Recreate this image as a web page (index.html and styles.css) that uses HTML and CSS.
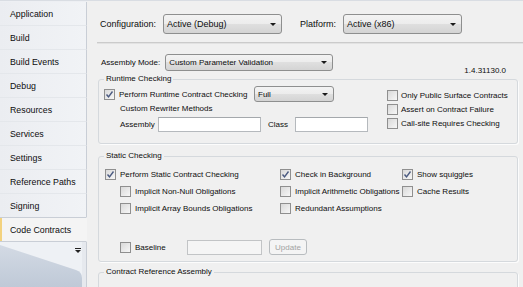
FILE: index.html
```html
<!DOCTYPE html>
<html>
	<head>
		<meta charset="UTF-8">
		<title>Code Contracts</title>
		<link rel="stylesheet" href="styles.css">
	</head>
	<body>
		<div class="page">
			<div class="tabs">
				<div class="tab">Application</div>
				<div class="tab">Build</div>
				<div class="tab">Build Events</div>
				<div class="tab">Debug</div>
				<div class="tab">Resources</div>
				<div class="tab">Services</div>
				<div class="tab">Settings</div>
				<div class="tab">Reference Paths</div>
				<div class="tab">Signing</div>
				<div class="tab active">Code Contracts</div>
				<div class="tabs-foot">
					<svg width="86" height="45" viewBox="0 0 86 45">
						<defs>
							<linearGradient id="fold" x1="0" y1="0" x2="0" y2="1">
								<stop offset="0" stop-color="#d3dae4"/>
								<stop offset="1" stop-color="#bfc9d7"/>
							</linearGradient>
						</defs>
						<path d="M0 3 L76 28 Q82 30 82 36 L82 45 L0 45 Z" fill="url(#fold)"/>
						<rect x="82" y="0" width="4" height="45" fill="#e6e9ee"/>
						<rect x="75" y="6" width="6" height="1" fill="#222"/>
						<polygon points="75,8 81,8 78,11" fill="#222"/>
					</svg>
				</div>
			</div>

			<div class="content">
				<div class="config-bar">
					<span class="lbl">Configuration:</span>
					<div class="combo big w-config"><span>Active (Debug)</span><i class="arrow"></i></div>
					<span class="lbl platform">Platform:</span>
					<div class="combo big w-platform"><span>Active (x86)</span><i class="arrow"></i></div>
				</div>
				<div class="sep"></div>

				<div class="mode-row">
					<span class="small">Assembly Mode:</span>
					<div class="combo w-mode"><span>Custom Parameter Validation</span><i class="arrow"></i></div>
					<span class="small version">1.4.31130.0</span>
				</div>

				<fieldset class="group">
					<legend>Runtime Checking</legend>
					<div class="runtime">
						<div class="rt-left">
							<div class="rt-row">
								<label class="check w-perform"><span class="cb on"><svg width="9" height="9" viewBox="0 0 9 9"><path d="M1.5 4.5 L3.5 6.8 L7.5 1.5" fill="none" stroke="#4a5a80" stroke-width="1.4"/></svg></span>Perform Runtime Contract Checking</label>
								<div class="combo w-full"><span>Full</span><i class="arrow"></i></div>
							</div>
							<div class="rt-caption">Custom Rewriter Methods</div>
							<div class="rt-row inputs">
								<span class="w-asm">Assembly</span>
								<span class="field w-asm-in"></span>
								<span class="w-class">Class</span>
								<span class="field w-class-in"></span>
							</div>
						</div>
						<div class="rt-right">
							<label class="check"><span class="cb"></span>Only Public Surface Contracts</label>
							<label class="check"><span class="cb"></span>Assert on Contract Failure</label>
							<label class="check"><span class="cb"></span>Call-site Requires Checking</label>
						</div>
					</div>
				</fieldset>

				<fieldset class="group static">
					<legend>Static Checking</legend>
					<div class="static-grid">
						<label class="check"><span class="cb on"><svg width="9" height="9" viewBox="0 0 9 9"><path d="M1.5 4.5 L3.5 6.8 L7.5 1.5" fill="none" stroke="#4a5a80" stroke-width="1.4"/></svg></span>Perform Static Contract Checking</label>
						<label class="check"><span class="cb on"><svg width="9" height="9" viewBox="0 0 9 9"><path d="M1.5 4.5 L3.5 6.8 L7.5 1.5" fill="none" stroke="#4a5a80" stroke-width="1.4"/></svg></span>Check in Background</label>
						<label class="check"><span class="cb on"><svg width="9" height="9" viewBox="0 0 9 9"><path d="M1.5 4.5 L3.5 6.8 L7.5 1.5" fill="none" stroke="#4a5a80" stroke-width="1.4"/></svg></span>Show squiggles</label>

						<label class="check indent"><span class="cb"></span>Implicit Non-Null Obligations</label>
						<label class="check"><span class="cb"></span>Implicit Arithmetic Obligations</label>
						<label class="check"><span class="cb"></span>Cache Results</label>

						<label class="check indent"><span class="cb"></span>Implicit Array Bounds Obligations</label>
						<label class="check"><span class="cb"></span>Redundant Assumptions</label>
						<span></span>
					</div>
					<div class="baseline-row">
						<label class="check w-baseline"><span class="cb"></span>Baseline</label>
						<span class="field disabled w-base-in"></span>
						<span class="button disabled">Update</span>
					</div>
				</fieldset>

				<fieldset class="group last">
					<legend>Contract Reference Assembly</legend>
				</fieldset>
			</div>
		</div>
	</body>
</html>
```

FILE: styles.css
```css
html,body{
	margin: 0;
	padding: 0;
}
body{
	width: 523px;
	height: 287px;
	overflow: hidden;
	background: #f0f0f0;
	color: #0d0d0d;
	font-family: "Liberation Sans", Arial, sans-serif;
}
.page{
	display: flex;
	height: 287px;
	border-top: 1px solid #d9dde3;
	box-sizing: border-box;
	overflow: hidden;
}

/* left tab strip */
.tabs{
	width: 87px;
	flex: none;
	display: flex;
	flex-direction: column;
	padding-top: 1px;
	background: #edeff3;
}
.tab{
	height: 24px;
	flex: none;
	box-sizing: border-box;
	display: flex;
	align-items: center;
	padding-left: 10px;
	font-size: 8.8px;
	border-right: 1px solid #c9ced6;
	border-bottom: 1px solid #e4e7eb;
	background: linear-gradient(to right, #ebedf1, #f1f3f6);
}
.tab.active{
	background: #f4f4f4;
	border-right-color: #f4f4f4;
	border-top: 1px solid #c9ced6;
	border-bottom: 1px solid #c9ced6;
	box-shadow: inset 2px 0 0 #f3d27e;
	margin-top: -1px;
	height: 25px;
}
.tabs-foot{
	flex: 1;
	border-right: 1px solid #c9ced6;
	background: #eef1f5;
}
.tabs-foot svg{
	display: block;
}

/* right page */
.content{
	flex: 1;
	padding-top: 13px;
	font-size: 9px;
}
.config-bar{
	display: flex;
	align-items: center;
	height: 20px;
	padding-left: 13px;
}
.lbl{
	margin-right: 7px;
}
.platform{
	margin-left: 18px;
}
.combo{
	display: flex;
	align-items: center;
	box-sizing: border-box;
	height: 17px;
	border: 1px solid #8e8f8f;
	border-radius: 3px;
	padding-left: 3px;
	background: linear-gradient(#f3f3f3, #ececec 50%, #dfdfdf 50%, #d4d4d4);
	font-size: 8px;
}
.combo.big{
	height: 20px;
	font-size: 9px;
}
.combo span{
	flex: 1;
}
.arrow{
	width: 0;
	height: 0;
	border-left: 3px solid transparent;
	border-right: 3px solid transparent;
	border-top: 3px solid #1a1a1a;
	margin-right: 5px;
}
.w-config{ width: 119px; }
.w-platform{ width: 119px; }
.w-mode{ width: 168px; }
.w-full{ width: 80px; height: 16px; }

.sep{
	margin: 8px 0 0 10px;
	height: 2px;
	box-sizing: border-box;
	border-top: 1px solid #cbcbcb;
	border-bottom: 1px solid #e2e2e2;
}

.small,
.group{
	font-size: 8px;
}
.mode-row{
	display: flex;
	align-items: flex-end;
	margin-top: 10px;
	padding: 0 17px 0 14px;
}
.mode-row .small{
	align-self: center;
	margin-right: 5px;
}
.mode-row .version{
	align-self: flex-end;
	margin: 0 0 -6px auto;
	line-height: 12px;
}

/* group boxes */
.group{
	margin: 2px 5px 0 11px;
	padding: 0;
	border: 1px solid #d5d9dd;
	border-radius: 3px;
	box-shadow: 1px 1px 0 #fcfcfc;
}
.group legend{
	margin-left: 5px;
	padding: 0 2px;
	line-height: 12px;
}
.check{
	display: flex;
	align-items: center;
	white-space: nowrap;
}
.cb{
	width: 11px;
	height: 11px;
	flex: none;
	box-sizing: border-box;
	border: 1px solid #8f8f8f;
	background: linear-gradient(135deg, #d9d9d9, #f7f7f7);
	margin-right: 4px;
	display: flex;
	align-items: center;
	justify-content: center;
}
.cb svg{
	display: block;
}
.field{
	display: block;
	box-sizing: border-box;
	height: 15px;
	background: #fff;
	border: 1px solid #b5b9bd;
	border-top-color: #a4a8ac;
}
.field.disabled{
	background: #f5f5f5;
	border-color: #c2c4c6;
}

/* runtime */
.runtime{
	display: flex;
	padding: 1px 0 11px 5px;
}
.rt-row{
	display: flex;
	align-items: center;
	height: 16px;
}
.w-perform{ width: 150px; }
.rt-caption{
	margin-left: 16px;
	line-height: 14px;
	height: 14px;
}
.rt-row.inputs{
	margin: 1px 0 0 16px;
	height: 15px;
}
.w-asm{ width: 38px; }
.w-asm-in{ width: 103px; }
.w-class{ width: 27px; margin-left: 7px; }
.w-class-in{ width: 73px; }
.rt-right{
	margin-left: 19px;
	padding-top: 2px;
}
.rt-right .check{
	height: 14px;
}
.rt-right .cb{
	margin-right: 3px;
}

/* static */
.static{
	margin-top: 6px;
}
.static-grid{
	display: grid;
	grid-template-columns: 175px 122px 1fr;
	grid-auto-rows: 17px;
	padding: 4px 0 0 6px;
}
.indent{
	padding-left: 15px;
}
.baseline-row{
	display: flex;
	align-items: center;
	height: 16px;
	margin-top: 22px;
	padding: 0 0 6px 21px;
}
.w-baseline{ width: 67px; }
.w-base-in{ width: 75px; }
.button{
	box-sizing: border-box;
	width: 38px;
	height: 16px;
	margin-left: 7px;
	border: 1px solid #b8bcbf;
	border-radius: 3px;
	background: #f4f4f4;
	display: flex;
	align-items: center;
	justify-content: center;
}
.button.disabled{
	color: #a3a3a3;
}
.last{
	margin-top: 4px;
	height: 40px;
}
```
